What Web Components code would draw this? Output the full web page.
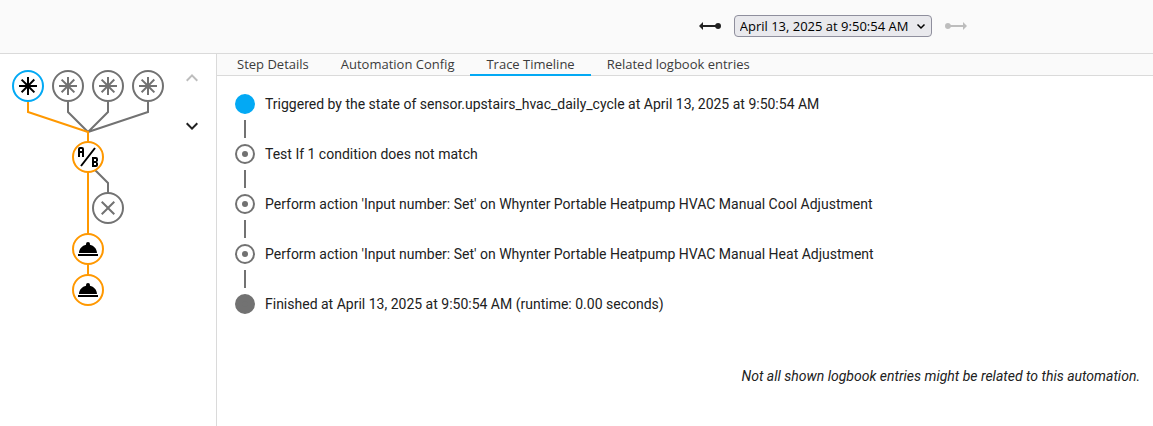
<!DOCTYPE html>
<html lang="en">
<head>
<meta charset="utf-8">
<meta name="viewport" content="width=device-width, initial-scale=1">
<title>Automation trace</title>
<style>
body{
margin: 0;
background: white;
color: #212121;
font-family: Roboto, sans-serif;
font-size: 14px;
--ui-font: "Open Sans", "Noto Sans", sans-serif;
--accent: #03a9f4;
--track: #ff9800;
--muted: #727272;
--divider: #dadada;
--bar: #fafafa;
}
</style>
</head>
<body>

<trace-page>
  <trace-picker slot="toolbar"></trace-picker>
  <trace-graph slot="graph"></trace-graph>
  <trace-tabs slot="tabs">
    <trace-tab>Step Details</trace-tab>
    <trace-tab>Automation Config</trace-tab>
    <trace-tab active>Trace Timeline</trace-tab>
    <trace-tab>Related logbook entries</trace-tab>
  </trace-tabs>
  <trace-timeline>
    <timeline-item kind="start">Triggered by the state of sensor.upstairs_hvac_daily_cycle at April 13, 2025 at 9:50:54 AM</timeline-item>
    <timeline-item kind="step">Test If 1 condition does not match</timeline-item>
    <timeline-item kind="step">Perform action 'Input number: Set' on Whynter Portable Heatpump HVAC Manual Cool Adjustment</timeline-item>
    <timeline-item kind="step">Perform action 'Input number: Set' on Whynter Portable Heatpump HVAC Manual Heat Adjustment</timeline-item>
    <timeline-item kind="end">Finished at April 13, 2025 at 9:50:54 AM (runtime: 0.00 seconds)</timeline-item>
    <span slot="note">Not all shown logbook entries might be related to this automation.</span>
  </trace-timeline>
</trace-page>

<script>
const icons = {
  older: 'M1,12L5,16V13H17.17C17.58,14.17 18.69,15 20,15A3,3 0 0,0 23,12A3,3 0 0,0 20,9C18.69,9 17.58,9.83 17.17,11H5V8L1,12Z',
  newer: 'M23,12L19,16V13H6.83C6.42,14.17 5.31,15 4,15A3,3 0 0,1 1,12A3,3 0 0,1 4,9C5.31,9 6.42,9.83 6.83,11H19V8L23,12Z',
  up: 'M7.41,15.41L12,10.83L16.59,15.41L18,14L12,8L6,14L7.41,15.41Z',
  down: 'M7.41,8.59L12,13.17L16.59,8.59L18,10L12,16L6,10L7.41,8.59Z',
  trigger: 'M21,13H14.4L19.1,17.7L17.7,19.1L13,14.4V21H11V14.3L6.3,19L4.9,17.6L9.4,13H3V11H9.6L4.9,6.3L6.3,4.9L11,9.6V3H13V9.4L17.6,4.8L19,6.3L14.3,11H21V13Z',
  condition: 'M4 2A2 2 0 0 0 2 4V12H4V8H6V12H8V4A2 2 0 0 0 6 2H4M4 4H6V6H4M22 15.5V14A2 2 0 0 0 20 12H16V22H20A2 2 0 0 0 22 20V18.5A1.54 1.54 0 0 0 20.5 17A1.54 1.54 0 0 0 22 15.5M20 20H18V18H20V20M20 16H18V14H20M5.79 21.61L4.21 20.39L18.21 2.39L19.79 3.61Z',
  close: 'M19,6.41L17.59,5L12,10.59L6.41,5L5,6.41L10.59,12L5,17.59L6.41,19L12,13.41L17.59,19L19,17.59L13.41,12L19,6.41Z',
  service: 'M12,5A2,2 0 0,1 14,7C14,7.24 13.96,7.47 13.88,7.69C17.95,8.5 21,11.91 21,16H3C3,11.91 6.05,8.5 10.12,7.69C10.04,7.47 10,7.24 10,7A2,2 0 0,1 12,5M22,19H2V17H22V19Z'
}

window.customElements.define(
'icon-button',
class extends HTMLElement {

  constructor(){
    super();
    this.attachShadow({mode:'open'});
  }

  connectedCallback(){
    const off = this.hasAttribute('disabled') ? 'disabled' : ''
    this.shadowRoot.innerHTML =
      `
    <style>
:host{
display: block;
}
button{
display: grid;
place-items: center;
width: 48px;
height: 48px;
padding: 0;
border: none;
background: none;
color: #212121;
}
button:disabled{
color: #bdbdbd;
}
svg{
width: 24px;
height: 24px;
fill: currentColor;
}
    </style>
    <button aria-label="${this.getAttribute('label')}" ${off}>
      <svg viewBox="0 0 24 24"><path d="${icons[this.getAttribute('icon')]}"/></svg>
    </button>
    `;
  }

})

window.customElements.define(
'trace-picker',
class extends HTMLElement {

  constructor(){
    super();
    this.attachShadow({mode:'open'});
  }

  connectedCallback(){
    this.shadowRoot.innerHTML =
      `
    <style>
:host{
display: flex;
align-items: center;
}
.pick{
display: block;
position: relative;
}
select{
display: block;
appearance: none;
width: 198px;
height: 22px;
padding: 0 4px 0 5px;
border: 1px solid #8f8f9d;
border-radius: 4px;
background: #e9e9ed;
color: black;
font: 13px/20px var(--ui-font);
}
.pick svg{
position: absolute;
right: 6px;
top: 6px;
width: 10px;
height: 10px;
fill: none;
stroke: black;
stroke-width: 1.5;
pointer-events: none;
}
    </style>
    <icon-button icon="older" label="Older trace"></icon-button>
    <div class="pick">
      <select aria-label="Trace">
        <option>April 13, 2025 at 9:50:54 AM</option>
      </select>
      <svg viewBox="0 0 10 10"><path d="M1.5 3.5L5 7L8.5 3.5"/></svg>
    </div>
    <icon-button icon="newer" label="Newer trace" disabled></icon-button>
    `;
  }

})

window.customElements.define(
'trace-graph',
class extends HTMLElement {

  constructor(){
    super();
    this.attachShadow({mode:'open'});
  }

  node(x, y, icon, state){
    return `<g class="${state}" transform="translate(${x} ${y})">
      <circle r="15"/><path class="icon" transform="translate(-12 -12)" d="${icons[icon]}"/>
    </g>`
  }

  connectedCallback(){
    this.shadowRoot.innerHTML =
      `
    <style>
:host{
display: flex;
justify-content: space-between;
align-items: flex-start;
}
.graph{
width: 168px;
height: 264px;
flex: none;
}
.line{
fill: none;
stroke: var(--muted);
stroke-width: 2;
}
.line.track{
stroke: var(--track);
}
circle{
fill: white;
stroke: var(--muted);
stroke-width: 2;
}
.icon{
fill: var(--muted);
}
.active circle{
stroke: var(--accent);
}
.track circle{
stroke: var(--track);
}
.active .icon, .track .icon{
fill: black;
}
    </style>
    <svg class="graph" viewBox="0 0 168 264" role="img" aria-label="Trace graph">
      <path class="line" d="M68 48V58L88 78M108 48V58L88 78M148 48V58L88 78M88 109L108 129V140"/>
      <path class="line track" d="M28 48V58L88 78V236"/>
      ${this.node(28, 32, 'trigger', 'active')}
      ${this.node(68, 32, 'trigger', '')}
      ${this.node(108, 32, 'trigger', '')}
      ${this.node(148, 32, 'trigger', '')}
      ${this.node(88, 103, 'condition', 'track')}
      ${this.node(108, 154, 'close', '')}
      ${this.node(88, 195, 'service', 'track')}
      ${this.node(88, 236, 'service', 'track')}
    </svg>
    <div>
      <icon-button icon="up" label="Previous step" disabled></icon-button>
      <icon-button icon="down" label="Next step"></icon-button>
    </div>
    `;
  }

})

window.customElements.define(
'trace-tab',
class extends HTMLElement {

  constructor(){
    super();
    this.attachShadow({mode:'open'});
  }

  connectedCallback(){
    this.shadowRoot.innerHTML =
      `
    <style>
:host{
display: block;
margin-bottom: -1px;
}
button{
display: block;
padding: 0 16px;
border: none;
border-bottom: 2px solid transparent;
background: none;
color: #3c3c3c;
font: 13px/20px var(--ui-font);
white-space: nowrap;
}
:host([active]) button{
border-color: var(--accent);
}
    </style>
    <button><slot></slot></button>
    `;
  }

})

window.customElements.define(
'trace-tabs',
class extends HTMLElement {

  constructor(){
    super();
    this.attachShadow({mode:'open'});
    this.shadowRoot.innerHTML =
      `
    <style>
:host{
display: flex;
padding-left: 4px;
background: var(--bar);
border-bottom: 1px solid var(--divider);
}
    </style>
    <slot></slot>
    `;
  }

  connectedCallback(){
    this.addEventListener('click', e =>{
      const tab = e.target.closest('trace-tab')
      if(!tab) return
      this.querySelectorAll('trace-tab').forEach(t => t.toggleAttribute('active', t == tab))
    })
  }

})

window.customElements.define(
'timeline-item',
class extends HTMLElement {

  constructor(){
    super();
    this.attachShadow({mode:'open'});
  }

  connectedCallback(){
    this.shadowRoot.innerHTML =
      `
    <style>
:host{
display: grid;
grid-template-columns: 20px 1fr;
column-gap: 10px;
line-height: 20px;
}
.dot{
box-sizing: border-box;
display: grid;
place-items: center;
width: 20px;
height: 20px;
border: 2px solid var(--muted);
border-radius: 50%;
}
.dot::after{
content: "";
width: 6px;
height: 6px;
border-radius: 50%;
background: var(--muted);
}
:host([kind=start]) .dot{
border-color: var(--accent);
background: var(--accent);
}
:host([kind=start]) .dot::after{
background: none;
}
:host([kind=end]) .dot{
background: var(--muted);
}
.line{
width: 2px;
height: 18px;
margin: 6px auto;
background: var(--muted);
}
:host([kind=end]) .line{
display: none;
}
    </style>
    <div class="dot"></div>
    <div><slot></slot></div>
    <div class="line"></div>
    `;
  }

})

window.customElements.define(
'trace-timeline',
class extends HTMLElement {

  constructor(){
    super();
    this.attachShadow({mode:'open'});
    this.shadowRoot.innerHTML =
      `
    <style>
:host{
display: block;
padding: 18px 13px 18px 18px;
}
.note{
margin-top: 52px;
line-height: 20px;
text-align: right;
font-style: italic;
}
    </style>
    <slot></slot>
    <div class="note"><slot name="note"></slot></div>
    `;
  }

})

window.customElements.define(
'trace-page',
class extends HTMLElement {

  constructor(){
    super();
    this.attachShadow({mode:'open'});
    this.shadowRoot.innerHTML =
      `
    <style>
:host{
display: flex;
flex-direction: column;
min-height: 100vh;
}
header{
display: grid;
grid-template-columns: 4fr 5fr;
align-items: center;
justify-items: center;
padding: 2px 0 3px;
background: var(--bar);
border-bottom: 1px solid var(--divider);
}
header slot::slotted(*){
grid-column: 2;
}
main{
display: grid;
grid-template-columns: 216px 1fr;
flex: 1;
}
section{
border-left: 1px solid var(--divider);
}
    </style>
    <header><slot name="toolbar"></slot></header>
    <main>
      <slot name="graph"></slot>
      <section>
        <slot name="tabs"></slot>
        <slot></slot>
      </section>
    </main>
    `;
  }

})
</script>
</body>
</html>
